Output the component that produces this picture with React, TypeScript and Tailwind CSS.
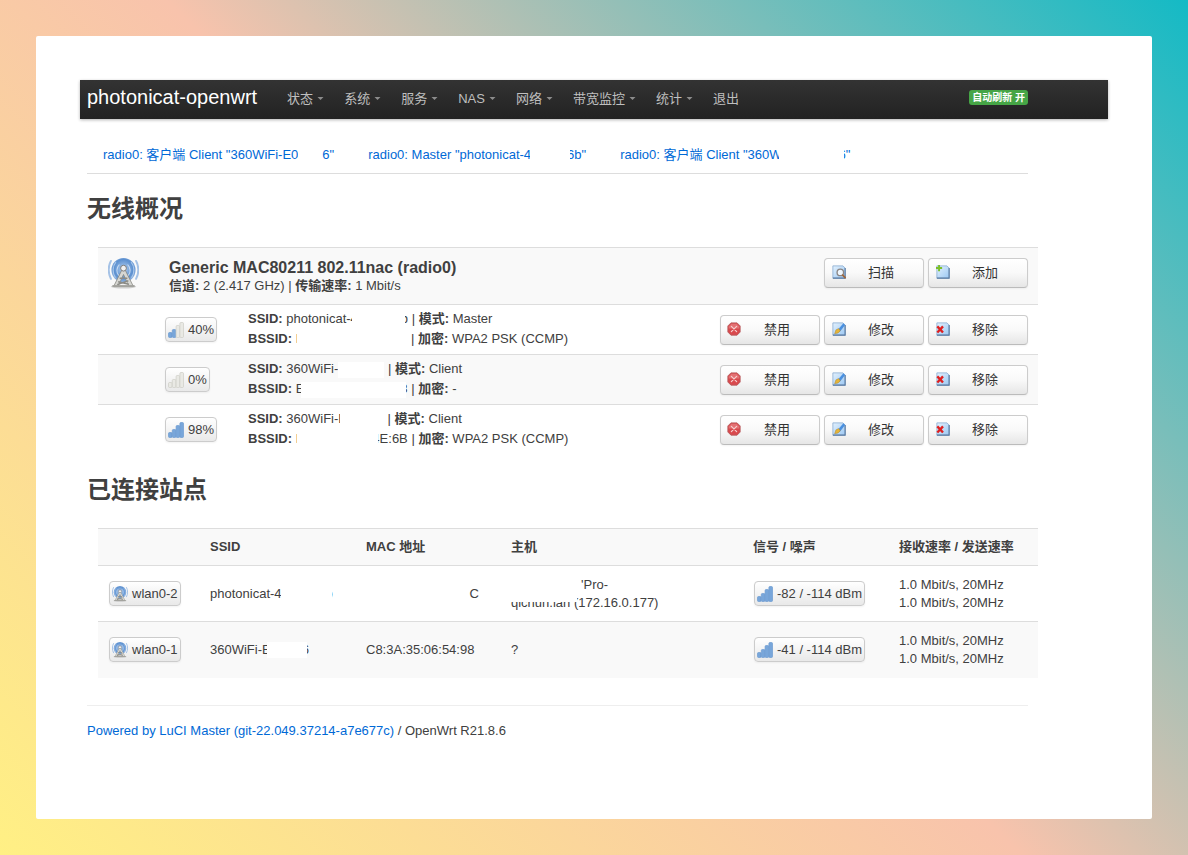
import type { ReactNode } from "react";

function AntennaIcon({ className }: { className: string }) {
  return (
    <svg viewBox="0 0 32 32" className={className} aria-hidden="true">
      <defs>
        <radialGradient id="waves" cx="50%" cy="45%" r="52%">
          <stop offset="0" stopColor="#dfebf9" />
          <stop offset="0.3" stopColor="#8fb5e3" />
          <stop offset="0.75" stopColor="#5c90d0" />
          <stop offset="1" stopColor="#86acdc" />
        </radialGradient>
      </defs>
      <ellipse cx="16" cy="29.500" rx="13" ry="2" fill="#888" opacity="0.35" />
      <circle cx="16" cy="12.500" r="12.500" fill="url(#waves)" />
      <g fill="none" strokeLinecap="round">
        <path d="M3 3C0 8 0 16 3 21.500M29 3c3 5 3 13.500 0 18.500" stroke="#a5c2e6" strokeWidth="2" />
        <path d="M8 4.500C4.500 8.500 4.500 15.500 7.500 20M24 4.500c3.500 4 3.500 11 .5 15.500" stroke="#a9c8ec" strokeWidth="1.100" />
        <path d="M11.500 7c-3 3-3 8-.5 11M20.500 7c3 3 3 8 .5 11" stroke="#c4daf3" strokeWidth="1.100" />
      </g>
      <path d="M14.500 12h3L26 29h-4.500L16 17l-5.500 12H6z" fill="#d7d7d3" stroke="#85857f" strokeWidth=".8" />
      <path d="M12 21h8M10.500 24.500l11 2.500M21 23.500L9.500 27.500" fill="none" stroke="#8b8b86" strokeWidth="1.600" />
      <path d="M4.500 29h23" stroke="#a3a39e" strokeWidth="2" />
      <circle cx="16" cy="10.500" r="3" fill="#f1f1f1" stroke="#777" strokeWidth="1" />
    </svg>
  );
}

function SignalIcon({ bars }: { bars: number }) {
  const heights = [5, 8, 12, 15];
  return (
    <svg viewBox="0 0 16 16" className="size-4 shrink-0" aria-hidden="true">
      {heights.map((h, i) => (
        <rect
          key={h}
          x={0.5 + i * 3.8}
          y={15.5 - h}
          width="3.6"
          height={h}
          rx="1"
          fill={i < bars ? "#78a6da" : "#e9e9e4"}
          stroke={i < bars ? "#6c9bd1" : "#cdcdc5"}
          strokeWidth="0.7"
        />
      ))}
    </svg>
  );
}

type ActionKind = "scan" | "add" | "disable" | "edit" | "remove";

function ActionIcon({ kind }: { kind: ActionKind }) {
  if (kind === "disable") {
    return (
      <svg viewBox="0 0 16 16" className="mb-0.5 -ml-px size-3.5 shrink-0" aria-hidden="true">
        <path d="M4.500 1h7L15 4.500v7L11.500 15h-7L1 11.500v-7z" fill="#d9494d" stroke="#b5585a" strokeLinejoin="round" />
        <path d="M5 2h6l3 3v2.500H2V5z" fill="#ea8c8e" opacity=".6" />
        <path d="M5 5l6 6M11 5l-6 6" stroke="#f6cfcf" strokeWidth="1.400" strokeLinecap="round" />
      </svg>
    );
  }
  return (
    <svg viewBox="0 0 16 16" className="mb-0.5 size-3.5 shrink-0" aria-hidden="true">
      <defs>
        <linearGradient id={`sheet-${kind}`} x1="0" y1="0" x2="1" y2="1">
          <stop offset="0" stopColor="#e3f1fd" />
          <stop offset="1" stopColor="#9cc8f3" />
        </linearGradient>
      </defs>
      <path d="M1 1h11.500L15 3.500V15H1z" fill={`url(#sheet-${kind})`} stroke="#8fb0d3" />
      <path d="M15 3.500V15H1" fill="none" stroke="#5b7ba1" strokeWidth="1.300" />
      {kind === "scan" && (
        <>
          <circle cx="9.500" cy="8.500" r="3.700" fill="#eef6fd" stroke="#8b8583" strokeWidth="1.500" />
          <path d="M12.200 11.500l2.800 3" stroke="#a0663a" strokeWidth="2" strokeLinecap="round" />
        </>
      )}
      {kind === "add" && <path d="M3.500 0v7M0 3.500h7" stroke="#7cbf2a" strokeWidth="2.200" />}
      {kind === "edit" && (
        <>
          <path d="M6.500 9L13 1.500l2 2L9 11z" fill="#4a90e0" />
          <path d="M3 13.500L4.500 9l3-1.500 2 2.500L7 12.500z" fill="#e5b53a" stroke="#a87d20" strokeWidth=".5" />
        </>
      )}
      {kind === "remove" && (
        <path d="M1.500 5l6.500 7M8 5l-6.500 7" stroke="#df2020" strokeWidth="2.700" />
      )}
    </svg>
  );
}

function ActionButton({ kind, children }: { kind: ActionKind; children: ReactNode }) {
  return (
    <button
      type="button"
      className="flex h-[30px] w-[100px] items-center rounded border border-[#ccc] border-b-[#bbb] bg-linear-to-b from-white via-[#f9f9f9] to-[#e6e6e6] pr-[29px] pl-[7px] text-[13px] text-[#333] shadow-xs"
    >
      <ActionIcon kind={kind} />
      <span className="flex-1 text-right">{children}</span>
    </button>
  );
}

function Badge({ icon, children }: { icon: ReactNode; children: ReactNode }) {
  return (
    <span className="ml-px inline-flex h-[25px] items-center gap-1 rounded border border-[#ccc] bg-linear-to-b from-white to-[#e9e9e9] px-0.5 align-middle whitespace-nowrap shadow-xs">
      {icon}
      <span>{children}</span>
    </span>
  );
}

/* Blank patch that hides part of a private value. */
function Patch({ className }: { className: string }) {
  return <span className={`relative z-10 inline-block h-4 bg-white align-middle ${className}`} />;
}

const menu = [
  { label: "状态", drop: true },
  { label: "系统", drop: true },
  { label: "服务", drop: true },
  { label: "NAS", drop: true },
  { label: "网络", drop: true },
  { label: "带宽监控", drop: true },
  { label: "统计", drop: true },
  { label: "退出", drop: false },
];

type Network = { bars: number; level: string; ssid: ReactNode; mode: string; bssid: ReactNode; cipher: string };

const networks: Network[] = [
  {
    bars: 2,
    level: "40%",
    ssid: <>photonicat-4<Patch className="-ml-[6px] w-[53px]" /><span className="-ml-1">b</span></>,
    mode: "Master",
    bssid: <>E<Patch className="-ml-[7px] w-[110px]" /></>,
    cipher: "WPA2 PSK (CCMP)",
  },
  {
    bars: 0,
    level: "0%",
    ssid: <>360WiFi-<Patch className="w-[46px]" /></>,
    mode: "Client",
    bssid: <>E<Patch className="-ml-[3px] w-[105px]" /><span className="-ml-[6px]">8</span></>,
    cipher: "-",
  },
  {
    bars: 4,
    level: "98%",
    ssid: <>360WiFi-E<Patch className="-ml-[7px] w-[44px]" /></>,
    mode: "Client",
    bssid: <>E<Patch className="-ml-[7px] w-[81px]" /><span className="-ml-[6px]">4</span>E:6B</>,
    cipher: "WPA2 PSK (CCMP)",
  },
];

export default function App() {
  return (
    <div className="flex min-h-screen bg-[linear-gradient(45deg,#fff084_0%,#f8c3ac_50%,#14bac5_100%)] p-9 font-['Liberation_Sans','Noto_Sans_CJK_SC',sans-serif] text-[13px] leading-[18px] text-[#404040]">
      <div className="flex-1 rounded-xs bg-white p-11">
        <header className="flex h-[39px] items-center bg-linear-to-b from-[#333] to-[#222] pr-20 pb-0.5 pl-[7px] shadow-[0_1px_3px_rgba(0,0,0,0.3)]">
          <a href="#home" className="pb-1 text-xl text-white">photonicat-openwrt</a>
          <nav className="flex flex-1 pl-[30px] text-[#bfbfbf]">
            {menu.map((m) => (
              <a key={m.label} href="#menu" className="flex items-center gap-1 pr-5">
                {m.label}
                {m.drop && (
                  <svg viewBox="0 0 8 4" className="mb-px h-[3px] w-[7px]" aria-hidden="true">
                    <path d="M0 0h8L4 4z" fill="#8c8c8c" />
                  </svg>
                )}
              </a>
            ))}
          </nav>
          <button type="button" className="mb-0.5 h-[15px] rounded-[3px] bg-[#46a546] px-[3px] text-[10px] leading-[15px] font-bold text-white">
            自动刷新 开
          </button>
        </header>

        <main className="pr-20 pl-[7px]">
          <nav className="mt-4 flex h-[39px] items-center gap-[34px] border-b border-[#ddd] pt-0.5 pl-4 whitespace-nowrap text-[#0069d6]">
            <a href="#net1">radio0: 客户端 Client "360WiFi-E0<Patch className="w-6" />6"</a>
            <a href="#net2">radio0: Master "photonicat-4<Patch className="-ml-px w-10" /><span className="-ml-[3px]">6b"</span></a>
            <a href="#net3">radio0: 客户端 Client "360W<Patch className="-ml-[3px] w-[65px]" /><span className="-ml-[5px]">6"</span></a>
          </nav>

          <h2 className="mt-[17px] text-2xl leading-9 font-bold">无线概况</h2>
          <section className="mt-5 -mr-[10px] ml-[11px]">
            <div className="flex h-[57px] border-t border-[#ddd] bg-[#f9f9f9] px-2.5 pt-2.5">
              <AntennaIcon className="size-[31px] shrink-0" />
              <div className="ml-[30px] flex-1">
                <div className="text-base leading-[19px] font-bold">Generic MAC80211 802.11nac (radio0)</div>
                <div>
                  <b>信道:</b> 2 (2.417 GHz) | <b>传输速率:</b> 1 Mbit/s
                </div>
              </div>
              <div className="flex gap-1">
                <ActionButton kind="scan">扫描</ActionButton>
                <ActionButton kind="add">添加</ActionButton>
              </div>
            </div>
            {networks.map((n) => (
              <div key={n.level} className="flex h-[50px] items-center border-t border-[#ddd] pr-2.5 pl-[66px] odd:bg-[#f9f9f9] even:bg-white">
                <div className="w-[84px]">
                  <Badge icon={<SignalIcon bars={n.bars} />}>{n.level}</Badge>
                </div>
                <div className="flex-1 pb-px leading-5 whitespace-nowrap">
                  <div><b>SSID:</b> {n.ssid} | <b>模式:</b> {n.mode}</div>
                  <div><b>BSSID:</b> {n.bssid} | <b>加密:</b> {n.cipher}</div>
                </div>
                <div className="flex gap-1">
                  <ActionButton kind="disable">禁用</ActionButton>
                  <ActionButton kind="edit">修改</ActionButton>
                  <ActionButton kind="remove">移除</ActionButton>
                </div>
              </div>
            ))}
          </section>

          <h2 className="mt-[18px] text-2xl leading-9 font-bold">已连接站点</h2>
          <div className="mt-5 -mr-[10px] ml-[11px]">
            <table className="w-full table-fixed text-left">
              <colgroup>
                <col className="w-[102px]" />
                <col className="w-[156px]" />
                <col className="w-[145px]" />
                <col />
                <col className="w-[146px]" />
                <col className="w-[149px]" />
              </colgroup>
              <thead>
                <tr className="h-[37px] border-t border-[#ddd] bg-[#f9f9f9]">
                  <th className="px-2.5" aria-label="接口" />
                  <th className="px-2.5">SSID</th>
                  <th className="px-2.5">MAC 地址</th>
                  <th className="px-2.5">主机</th>
                  <th className="px-2.5">信号 / 噪声</th>
                  <th className="px-2.5">接收速率 / 发送速率</th>
                </tr>
              </thead>
              <tbody className="whitespace-nowrap">
                <tr className="h-14 border-t border-[#ddd]">
                  <td className="px-2.5"><Badge icon={<AntennaIcon className="size-4" />}>wlan0-2</Badge></td>
                  <td className="px-2.5">photonicat-4<Patch className="-ml-px w-[51px]" /><span className="-ml-[6px]">b</span></td>
                  <td className="px-2.5 text-right"><span className="pr-3">C</span></td>
                  <td className="px-2.5">
                    <div><Patch className="w-[70px]" />'Pro-</div>
                    <div className="relative">
                      qichun.lan (172.16.0.177)
                      <span className="absolute top-0 left-0 h-2 w-[66px] bg-white" />
                    </div>
                  </td>
                  <td className="px-2.5"><Badge icon={<SignalIcon bars={4} />}>-82 / -114 dBm</Badge></td>
                  <td className="px-2.5">1.0 Mbit/s, 20MHz<br />1.0 Mbit/s, 20MHz</td>
                </tr>
                <tr className="h-14 border-t border-[#ddd] bg-[#f9f9f9]">
                  <td className="px-2.5"><Badge icon={<AntennaIcon className="size-4" />}>wlan0-1</Badge></td>
                  <td className="px-2.5">360WiFi-E<Patch className="-ml-1 w-[40px]" /><span className="-ml-[5px]">6</span></td>
                  <td className="px-2.5">C8:3A:35:06:54:98</td>
                  <td className="px-2.5">?</td>
                  <td className="px-2.5"><Badge icon={<SignalIcon bars={4} />}>-41 / -114 dBm</Badge></td>
                  <td className="px-2.5">1.0 Mbit/s, 20MHz<br />1.0 Mbit/s, 20MHz</td>
                </tr>
              </tbody>
            </table>
          </div>

          <footer className="mt-[27px] border-t border-[#eee] pt-4">
            <a href="#luci" className="text-[#0069d6]">Powered by LuCI Master (git-22.049.37214-a7e677c)</a> / OpenWrt R21.8.6
          </footer>
        </main>
      </div>
    </div>
  );
}
